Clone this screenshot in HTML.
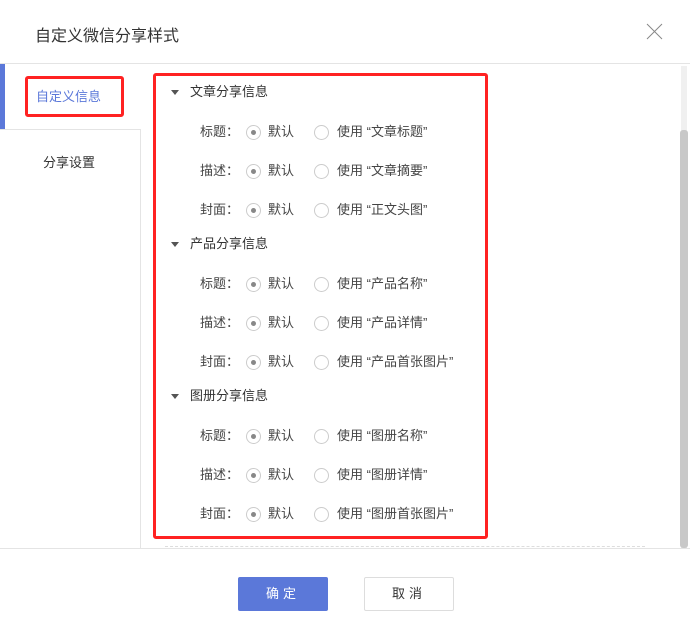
<!DOCTYPE html>
<html><head><meta charset="utf-8"><style>
*{margin:0;padding:0;box-sizing:border-box}
body{width:690px;height:637px;background:#fff;font-family:"Liberation Sans","Noto Sans CJK SC",sans-serif;position:relative;overflow:hidden;color:#333}
.a{position:absolute;white-space:nowrap}
.t{font-size:13px;color:#444;line-height:20px}
.r{position:absolute;width:15px;height:15px;border:1px solid #ccc;border-radius:50%;background:#fff}
.r.on::after{content:"";position:absolute;left:4px;top:4px;width:5px;height:5px;border-radius:50%;background:#888}
</style></head><body>
<div class="a" style="left:35px;top:22px;font-size:16px;color:#333">自定义微信分享样式</div>
<svg class="a" style="left:646px;top:23px" width="17" height="17"><path d="M1 1L16 16M16 1L1 16" stroke="#888" stroke-width="1"/></svg>
<div class="a" style="left:0;top:63px;width:690px;height:1px;background:#e4e4e4"></div>
<div class="a" style="left:0;top:64px;width:5px;height:65px;background:#5b78d9"></div>
<div class="a" style="left:0;top:129px;width:141px;height:1px;background:#e4e4e4"></div>
<div class="a" style="left:140px;top:129px;width:1px;height:420px;background:#e4e4e4"></div>
<div class="a" style="left:25px;top:76px;width:99px;height:41px;border:3px solid #f22;border-radius:3px"></div>
<div class="a" style="left:36px;top:86px;font-size:13px;color:#5b78d9">自定义信息</div>
<div class="a" style="left:43px;top:152px;font-size:13px;color:#333">分享设置</div>
<div class="a" style="left:153px;top:73px;width:335px;height:466px;border:3px solid #f22;border-radius:3px"></div>
<div class="a" style="left:681px;top:66px;width:6px;height:482px;background:#f0f0f0"></div>
<div class="a" style="left:680px;top:130px;width:8px;height:418px;background:#c8c8c8;border-radius:3px"></div>
<div class="a" style="left:165px;top:546px;width:480px;border-top:1px dashed #ddd"></div>
<div class="a" style="left:0;top:548px;width:690px;height:1px;background:#e4e4e4"></div>
<div id="c"></div>
<div class="a" style="left:238px;top:577px;width:90px;height:34px;background:#5b78d9;border-radius:2px;color:#fff;font-size:13px;text-align:center;line-height:34px;letter-spacing:4px">确定</div>
<div class="a" style="left:364px;top:577px;width:90px;height:34px;border:1px solid #ddd;border-radius:2px;color:#333;font-size:13px;text-align:center;line-height:32px;letter-spacing:4px">取消</div>
<script>
var S=[["文章分享信息",["文章标题","文章摘要","正文头图"]],["产品分享信息",["产品名称","产品详情","产品首张图片"]],["图册分享信息",["图册名称","图册详情","图册首张图片"]]];
var L=["标题：","描述：","封面："],h="";
S.forEach(function(s,i){var y=82+i*152;
h+='<svg class="a" style="left:171px;top:'+(y+8)+'px" width="8" height="6"><path d="M0 0H8L4 5Z" fill="#555"/></svg>';
h+='<div class="a t" style="left:190px;top:'+y+'px;color:#333">'+s[0]+'</div>';
s[1].forEach(function(o,j){var yy=y+40+j*39;
h+='<div class="a t" style="left:200px;top:'+yy+'px">'+L[j]+'</div>';
h+='<div class="r on" style="left:246px;top:'+(yy+3)+'px"></div>';
h+='<div class="a t" style="left:268px;top:'+yy+'px">默认</div>';
h+='<div class="r" style="left:314px;top:'+(yy+3)+'px"></div>';
h+='<div class="a t" style="left:337px;top:'+yy+'px">使用 “'+o+'”</div>';});});
document.getElementById("c").innerHTML=h;
</script>
</body></html>
